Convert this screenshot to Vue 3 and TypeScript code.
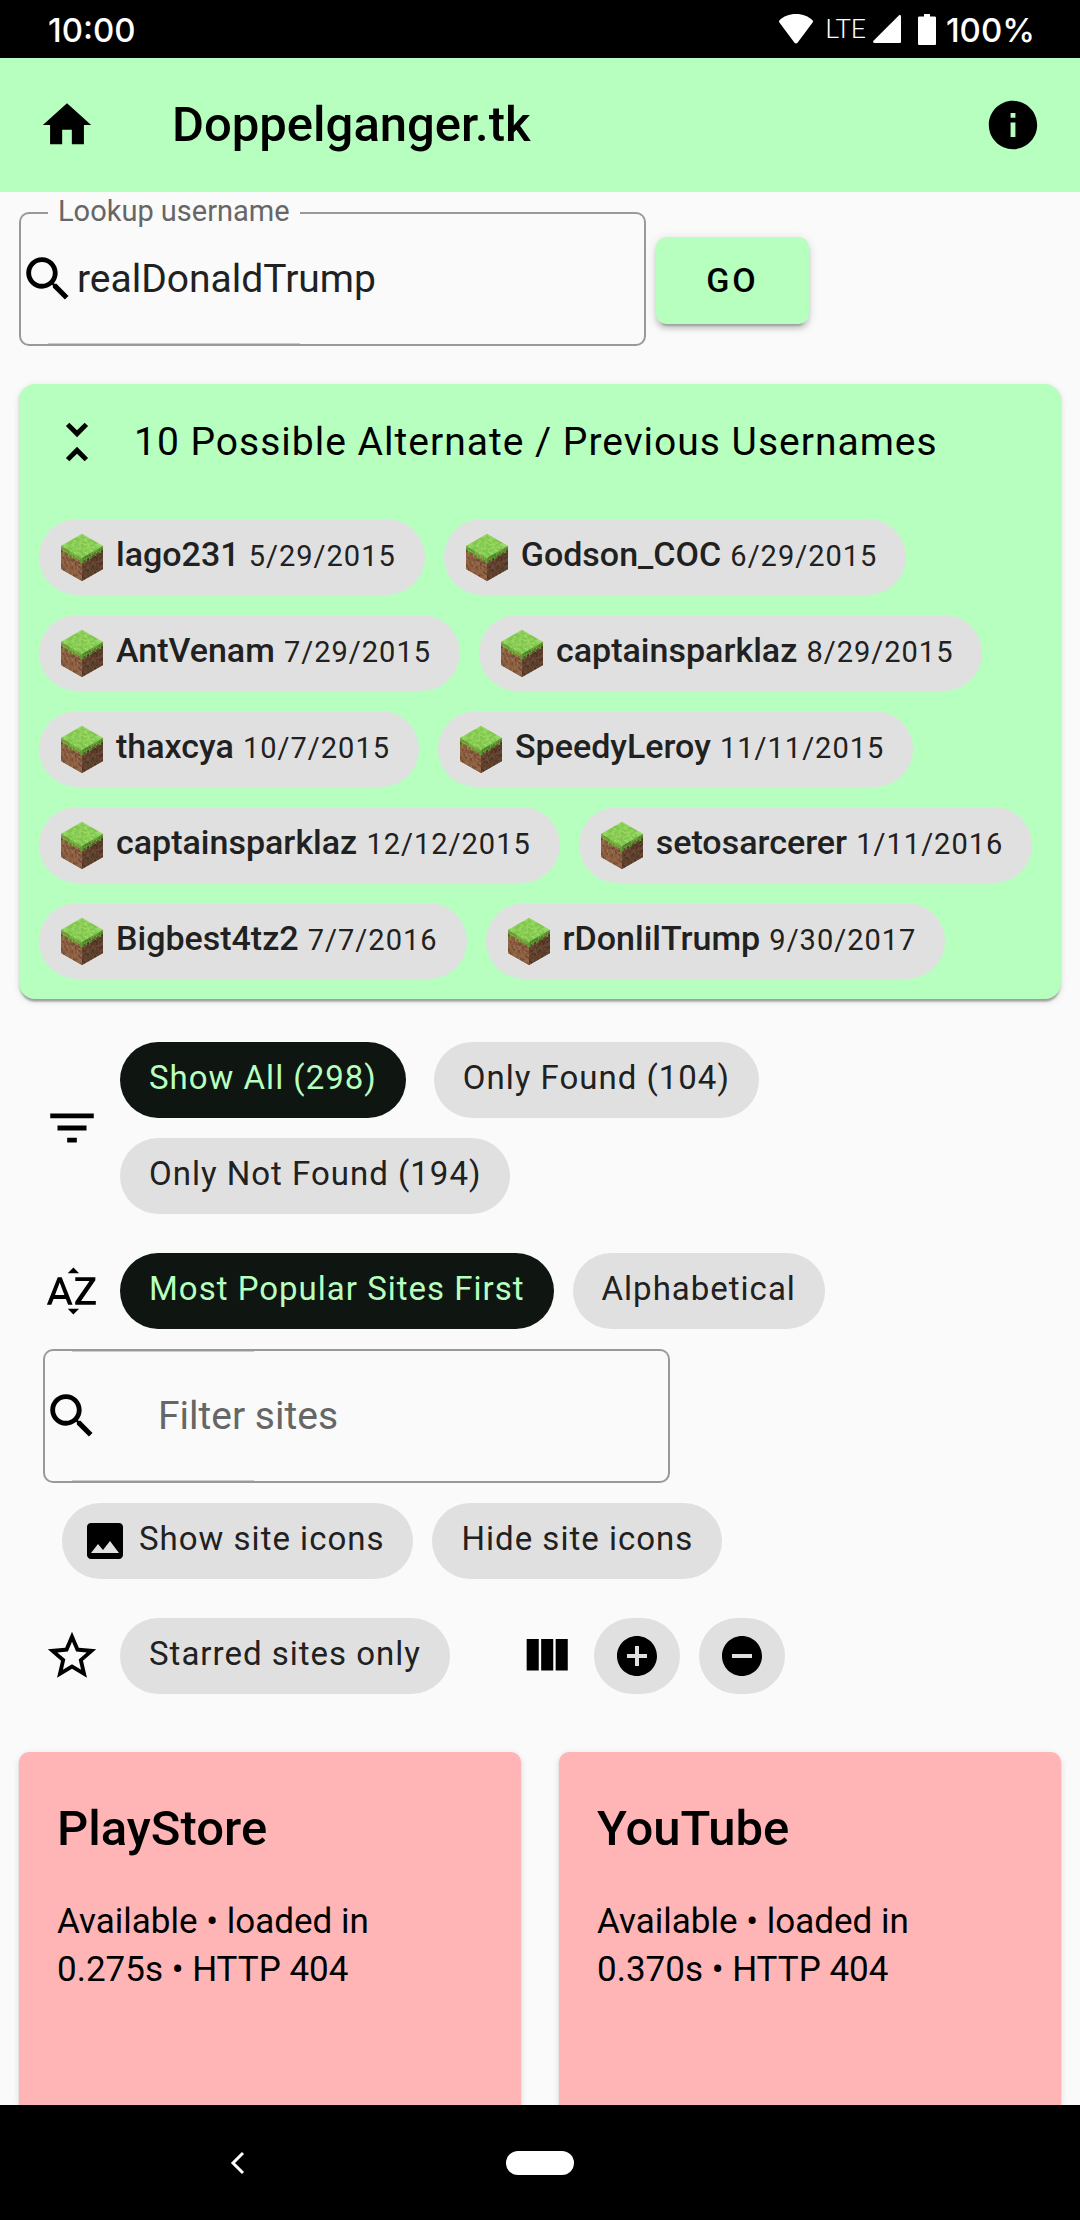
<script setup lang="ts">
import { computed, ref } from 'vue'

interface Alias {
  name: string
  date: string
}

interface Site {
  name: string
  seconds: string
  code: number
}

interface Cell {
  points: string
  fill: string
}

type Point = [number, number]

const username = ref('realDonaldTrump')
const siteQuery = ref('')
const expanded = ref(true)
const shown = ref('all')
const order = ref('popular')
const starredOnly = ref(false)

const aliases: Alias[] = [
  { name: 'lago231', date: '5/29/2015' },
  { name: 'Godson_COC', date: '6/29/2015' },
  { name: 'AntVenam', date: '7/29/2015' },
  { name: 'captainsparklaz', date: '8/29/2015' },
  { name: 'thaxcya', date: '10/7/2015' },
  { name: 'SpeedyLeroy', date: '11/11/2015' },
  { name: 'captainsparklaz', date: '12/12/2015' },
  { name: 'setosarcerer', date: '1/11/2016' },
  { name: 'Bigbest4tz2', date: '7/7/2016' },
  { name: 'rDonlilTrump', date: '9/30/2017' },
]

const visibilityOptions = [
  { id: 'all', label: 'Show All (298)' },
  { id: 'found', label: 'Only Found (104)' },
  { id: 'missing', label: 'Only Not Found (194)' },
]

const orderOptions = [
  { id: 'popular', label: 'Most Popular Sites First' },
  { id: 'alpha', label: 'Alphabetical' },
]

const sites: Site[] = [
  { name: 'PlayStore', seconds: '0.275', code: 404 },
  { name: 'YouTube', seconds: '0.370', code: 404 },
]

const heading = computed(() => `${aliases.length} Possible Alternate / Previous Usernames`)

// Isometric grass block: every face is a grid of small tinted cells.
const grassTop = ['#8acd55', '#94d65f', '#82c44e', '#9bdc6b', '#8ed159', '#7dbf4a']
const grassLeft = ['#6fb83c', '#62a535', '#79c246']
const grassRight = ['#5c9f32', '#4f8c2a', '#66aa3a']
const dirtLeft = ['#8f6244', '#7f5338', '#9c7050', '#6f4830', '#875a3e', '#956949']
const dirtRight = ['#62432f', '#543827', '#704d39', '#48301f', '#684a3a', '#5b3f2b']
const fringe = [2, 3, 2, 2, 3, 2, 3, 3, 2, 3, 2, 3]

function buildFace(
  origin: Point,
  u: Point,
  v: Point,
  pick: (column: number, row: number, noise: number) => string,
): Cell[] {
  const size = 12
  const cells: Cell[] = []
  for (let row = 0; row < size; row++) {
    for (let column = 0; column < size; column++) {
      const noise = (column * 73 + row * 151 + column * row * 37 + row * row * 19) % 97
      const corners: Point[] = [
        [column, row],
        [column + 1, row],
        [column + 1, row + 1],
        [column, row + 1],
      ]
      const points = corners
        .map(([a, b]) => {
          const x = origin[0] + (u[0] * a + v[0] * b) / size
          const y = origin[1] + (u[1] * a + v[1] * b) / size
          return `${x.toFixed(2)},${y.toFixed(2)}`
        })
        .join(' ')
      cells.push({ points, fill: pick(column, row, noise) })
    }
  }
  return cells
}

const blockCells: Cell[] = [
  ...buildFace([21, 0], [21, 12], [-21, 12], (_c, _r, n) => grassTop[n % 6]),
  ...buildFace([0, 12], [21, 12], [0, 23], (c, r, n) =>
    r < fringe[c] ? grassLeft[n % 3] : dirtLeft[n % 6]),
  ...buildFace([21, 24], [21, -12], [0, 23], (c, r, n) =>
    r < fringe[11 - c] ? grassRight[n % 3] : dirtRight[n % 6]),
]
</script>

<template>
  <svg class="sprite" aria-hidden="true">
    <symbol id="grass-block" viewBox="0 0 42 47">
      <polygon points="21,0 42,12 21,24 0,12" fill="#8ed159" />
      <polygon points="0,12 21,24 21,47 0,35" fill="#85593d" />
      <polygon points="21,24 42,12 42,35 21,47" fill="#5e402e" />
      <polygon v-for="(cell, i) in blockCells" :key="i" :points="cell.points" :fill="cell.fill" />
    </symbol>
  </svg>

  <div class="screen">
    <div class="status">
      <span class="clock">10:00</span>
      <div class="status-right">
        <svg class="wifi" viewBox="0 0 34 30" aria-hidden="true">
          <path d="M17 0C10 0 4.500 2.500.6 6.200c-.7.700-.8 1.500-.2 2.300l14.900 20c1 1.300 2.400 1.300 3.400 0l14.900-20c.6-.8.500-1.600-.2-2.300C29.500 2.500 24 0 17 0z" />
        </svg>
        <span class="network">LTE</span>
        <svg class="signal" viewBox="0 0 28 28" aria-hidden="true">
          <path d="M28 1.500V26.500c0 1-.5 1.500-1.500 1.500H1.500C.1 28-.4 26.800.5 25.800L25.800.5C26.800-.4 28 .1 28 1.500z" />
        </svg>
        <svg class="battery" viewBox="0 0 18 31" aria-hidden="true">
          <path d="M6 0h6v2.500h4.500c1 0 1.500.5 1.500 1.500v25.500c0 1-.5 1.500-1.500 1.500h-15C.5 31 0 30.500 0 29.500V4c0-1 .5-1.500 1.500-1.500H6z" />
        </svg>
        <span class="clock">100%</span>
      </div>
    </div>

    <header class="bar">
      <button class="icon-button" type="button" aria-label="Home">
        <svg class="icon" viewBox="0 0 24 24"><path d="M10 20v-6h4v6h5v-8h3L12 3 2 12h3v8z" /></svg>
      </button>
      <h1 class="title">Doppelganger.tk</h1>
      <button class="icon-button" type="button" aria-label="About">
        <svg class="icon" viewBox="0 0 24 24"><path d="M12 2C6.480 2 2 6.480 2 12s4.480 10 10 10 10-4.480 10-10S17.520 2 12 2zm1 15h-2v-6h2v6zm0-8h-2V7h2v2z" /></svg>
      </button>
    </header>

    <main class="content">
      <form class="lookup" @submit.prevent>
        <div class="field">
          <svg class="icon" viewBox="0 0 24 24" aria-hidden="true"><path d="M15.500 14h-.79l-.28-.27C15.410 12.590 16 11.110 16 9.500 16 5.910 13.090 3 9.500 3S3 5.910 3 9.500 5.910 16 9.500 16c1.610 0 3.090-.59 4.230-1.570l.27.28v.79l5 4.990L20.490 19l-4.990-5zm-6 0C7.010 14 5 11.990 5 9.500S7.010 5 9.500 5 14 7.010 14 9.500 11.990 14 9.500 14z" /></svg>
          <input id="username" v-model="username" class="field-input" type="text" />
          <div class="outline">
            <span class="edge-start"></span>
            <span class="notch open"><label class="field-label" for="username">Lookup username</label></span>
            <span class="edge-end"></span>
          </div>
        </div>
        <button class="go" type="submit">GO</button>
      </form>

      <section class="aliases">
        <button class="aliases-head" type="button" :aria-expanded="expanded" @click="expanded = !expanded">
          <svg class="icon" viewBox="0 0 24 24" aria-hidden="true"><path d="M7.410 18.590L8.830 20 12 16.830 15.170 20l1.410-1.410L12 14l-4.590 4.590zm9.180-13.180L15.170 4 12 7.170 8.830 4 7.410 5.410 12 10l4.590-4.590z" /></svg>
          <span>{{ heading }}</span>
        </button>
        <div v-if="expanded" class="alias-chips">
          <button v-for="(alias, i) in aliases" :key="i" class="chip with-icon" type="button">
            <svg class="block" aria-hidden="true"><use href="#grass-block" /></svg>
            <span class="chip-text"><b class="alias-name">{{ alias.name }}</b> <small class="alias-date">{{ alias.date }}</small></span>
          </button>
        </div>
      </section>

      <section class="options">
        <div class="option-row">
          <svg class="icon" viewBox="0 0 24 24" aria-hidden="true"><path d="M10 18h4v-2h-4v2zM3 6v2h18V6H3zm3 7h12v-2H6v2z" /></svg>
          <div class="chips wide-gap">
            <button
              v-for="option in visibilityOptions"
              :key="option.id"
              class="chip"
              :class="{ selected: shown === option.id }"
              type="button"
              :aria-pressed="shown === option.id"
              @click="shown = option.id"
            >
              <span class="chip-text">{{ option.label }}</span>
            </button>
          </div>
        </div>

        <div class="option-row">
          <svg class="icon" viewBox="0 0 24 24" aria-hidden="true"><path d="M14.940 4.660h-4.720l2.360-2.360zm-4.690 14.710h4.660l-2.330 2.330zM6.100 6.270L1.600 17.730h1.840l.92-2.450h5.110l.92 2.450h1.840L7.740 6.270H6.100zm-1.130 7.370l1.940-5.180 1.940 5.180H4.970zm10.760 2.500h6.120v1.590h-8.530v-1.290l5.920-8.560h-5.880v-1.600h8.300v1.260l-5.930 8.600z" /></svg>
          <div class="chips">
            <button
              v-for="option in orderOptions"
              :key="option.id"
              class="chip"
              :class="{ selected: order === option.id }"
              type="button"
              :aria-pressed="order === option.id"
              @click="order = option.id"
            >
              <span class="chip-text">{{ option.label }}</span>
            </button>
          </div>
        </div>

        <div class="field filter">
          <svg class="icon" viewBox="0 0 24 24" aria-hidden="true"><path d="M15.500 14h-.79l-.28-.27C15.410 12.590 16 11.110 16 9.500 16 5.910 13.090 3 9.500 3S3 5.910 3 9.500 5.910 16 9.500 16c1.610 0 3.090-.59 4.230-1.570l.27.28v.79l5 4.990L20.490 19l-4.990-5zm-6 0C7.010 14 5 11.990 5 9.500S7.010 5 9.500 5 14 7.010 14 9.500 11.990 14 9.500 14z" /></svg>
          <input v-model="siteQuery" class="field-input" type="text" placeholder="Filter sites" aria-label="Filter sites" />
          <div class="outline">
            <span class="edge-start"></span>
            <span class="notch closed"></span>
            <span class="edge-end"></span>
          </div>
        </div>

        <div class="chips icon-choice">
          <button class="chip with-icon" type="button">
            <svg class="chip-icon" viewBox="0 0 24 24" aria-hidden="true"><path d="M21 19V5c0-1.100-.9-2-2-2H5c-1.100 0-2 .9-2 2v14c0 1.100.9 2 2 2h14c1.100 0 2-.9 2-2zM8.500 13.500l2.500 3.010L14.500 12l4.500 6H5l3.500-4.500z" /></svg>
            <span class="chip-text">Show site icons</span>
          </button>
          <button class="chip" type="button"><span class="chip-text">Hide site icons</span></button>
        </div>

        <div class="option-row">
          <svg class="icon" viewBox="0 0 24 24" aria-hidden="true"><path d="M22 9.240l-7.190-.62L12 2 9.190 8.630 2 9.240l5.460 4.730L5.820 21 12 17.270 18.180 21l-1.630-7.030L22 9.240zM12 15.400l-3.760 2.270 1-4.280-3.320-2.880 4.380-.38L12 6.100l1.710 4.040 4.380.38-3.320 2.880 1 4.280L12 15.400z" /></svg>
          <button class="chip" type="button" :aria-pressed="starredOnly" @click="starredOnly = !starredOnly">
            <span class="chip-text">Starred sites only</span>
          </button>
          <svg class="icon columns" viewBox="0 0 24 24" aria-hidden="true"><path d="M10 18h5V5h-5v13zm-6 0h5V5H4v13zM16 5v13h5V5h-5z" /></svg>
          <button class="chip only-icon" type="button" aria-label="More columns">
            <svg class="chip-icon" viewBox="0 0 24 24"><path d="M12 2C6.480 2 2 6.480 2 12s4.480 10 10 10 10-4.480 10-10S17.520 2 12 2zm5 11h-4v4h-2v-4H7v-2h4V7h2v4h4v2z" /></svg>
          </button>
          <button class="chip only-icon" type="button" aria-label="Fewer columns">
            <svg class="chip-icon" viewBox="0 0 24 24"><path d="M12 2C6.480 2 2 6.480 2 12s4.480 10 10 10 10-4.480 10-10S17.520 2 12 2zm5 11H7v-2h10v2z" /></svg>
          </button>
        </div>
      </section>

      <section class="sites">
        <article v-for="site in sites" :key="site.name" class="site">
          <h2 class="site-name">{{ site.name }}</h2>
          <p class="site-info">Available • loaded in {{ site.seconds }}s • HTTP {{ site.code }}</p>
        </article>
      </section>
    </main>

    <nav class="system-nav">
      <button class="back" type="button" aria-label="Back">
        <svg viewBox="0 0 16 24"><path d="M14 2L4 12l10 10" /></svg>
      </button>
      <button class="pill" type="button" aria-label="Home screen"></button>
    </nav>
  </div>
</template>

<style>
body {
  margin: 0;
  background: #fafafa;
}
</style>

<style scoped>
.sprite {
  position: absolute;
  width: 0;
  height: 0;
}

.screen {
  display: flex;
  flex-direction: column;
  min-height: 100vh;
  color: #000;
  font-family: Roboto, "Noto Sans", sans-serif;
  font-size: 34px;
  line-height: 48px;
}

.screen,
.screen * {
  box-sizing: border-box;
}

button {
  margin: 0;
  padding: 0;
  border: 0;
  background: none;
  color: inherit;
  font: inherit;
  cursor: pointer;
}

svg {
  display: block;
  flex: none;
  fill: currentColor;
}

.icon {
  width: 58px;
  height: 58px;
}

.status {
  display: flex;
  align-items: center;
  justify-content: space-between;
  height: 58px;
  padding: 0 45px 0 48px;
  background: #000;
  color: #fff;
}

.status-right {
  display: flex;
  align-items: center;
}

.clock {
  padding-top: 2px;
  font-family: Inter, Roboto, sans-serif;
  font-size: 33px;
  font-weight: 500;
}

.wifi {
  width: 34px;
  height: 30px;
}

.network {
  margin: 0 7px 0 12px;
  font-size: 26px;
  font-weight: 300;
}

.signal {
  width: 28px;
  height: 28px;
}

.battery {
  width: 18px;
  height: 31px;
  margin: 0 10px 0 17px;
}

.bar {
  display: flex;
  align-items: center;
  gap: 76px;
  height: 134px;
  padding: 0 38px;
  background: #b7ffbf;
}

.title {
  flex: 1;
  margin: 0;
  font-size: 49px;
  font-weight: 500;
}

.content {
  display: flex;
  flex: 1;
  flex-direction: column;
  padding: 20px 19px 0;
}

.lookup {
  display: flex;
  align-items: center;
  gap: 10px;
  margin-bottom: 38px;
}

.field {
  position: relative;
  display: flex;
  align-items: center;
  width: 627px;
  max-width: 100%;
  height: 134px;
}

.field-input {
  flex: 1;
  min-width: 0;
  height: 100%;
  padding: 0;
  border: 0;
  outline: 0;
  background: none;
  color: #212121;
  font: inherit;
  font-size: 39px;
}

.field-input::placeholder {
  color: #666;
  opacity: 1;
}

.filter .field-input {
  padding-left: 57px;
}

.outline {
  position: absolute;
  inset: 0;
  display: flex;
  pointer-events: none;
}

.edge-start {
  width: 29px;
  border: 2px solid #999;
  border-right: 0;
  border-radius: 10px 0 0 10px;
}

.edge-end {
  flex: 1;
  border: 2px solid #999;
  border-left: 0;
  border-radius: 0 10px 10px 0;
}

.notch {
  border-bottom: 2px solid #999;
  box-shadow: inset 0 -1px #ccc;
}

.notch.open {
  padding: 0 10px;
}

.notch.closed {
  width: 182px;
  border-top: 2px solid #999;
  box-shadow: inset 0 -1px #ccc, inset 0 1px #ccc;
}

.field-label {
  display: block;
  margin-top: -25px;
  color: #666;
  font-size: 29px;
}

.go {
  width: 153px;
  height: 87px;
  margin-top: 2px;
  border-radius: 10px;
  background: #b7ffbf;
  box-shadow: 0 7px 2px -5px rgba(0, 0, 0, 0.2), 0 5px 5px rgba(0, 0, 0, 0.14), 0 2px 12px rgba(0, 0, 0, 0.12);
  font-weight: 500;
  letter-spacing: 3px;
}

.aliases {
  border-radius: 16px;
  background: #b7ffbf;
  box-shadow: 0 5px 2px -2px rgba(0, 0, 0, 0.2), 0 2px 2px rgba(0, 0, 0, 0.14), 0 2px 7px rgba(0, 0, 0, 0.12);
}

.aliases-head {
  display: flex;
  align-items: center;
  gap: 28px;
  width: 100%;
  height: 115px;
  padding: 0 29px;
  font-size: 39px;
  letter-spacing: 1px;
  text-align: left;
}

.alias-chips {
  display: flex;
  flex-wrap: wrap;
  gap: 20px 19px;
  padding: 20px;
}

.chips {
  display: flex;
  flex-wrap: wrap;
  gap: 20px 19px;
}

.chips.wide-gap {
  column-gap: 28px;
}

.chip {
  display: inline-flex;
  align-items: center;
  gap: 10px;
  height: 76px;
  padding: 0 29px;
  border-radius: 38px;
  background: #e0e0e0;
  color: #212121;
  font-size: 33px;
  letter-spacing: 1px;
}

.chip.with-icon {
  padding-left: 19px;
}

.chip.only-icon {
  padding: 0 19px;
}

.chip.selected {
  background: #0f1611;
  color: #b7ffbf;
}

.chip-text {
  padding-bottom: 4px;
  white-space: nowrap;
}

.chip-icon {
  width: 48px;
  height: 48px;
  color: #000;
}

.block {
  width: 42px;
  height: 47px;
  margin: 0 3px;
}

.alias-name {
  font-size: 34px;
  font-weight: 500;
  letter-spacing: 0;
}

.alias-date {
  font-size: 29px;
}

.options {
  display: flex;
  flex-direction: column;
  gap: 20px;
  padding: 43px 24px 58px;
}

.option-row {
  display: flex;
  align-items: center;
  gap: 19px;
}

.option-row + .option-row,
.icon-choice + .option-row {
  margin-top: 19px;
}

.icon-choice {
  padding-left: 19px;
}

.columns {
  margin-left: 48px;
}

.sites {
  display: grid;
  flex: 1;
  grid-template-columns: 1fr 1fr;
  gap: 38px;
}

.site {
  padding: 48px 38px;
  border-radius: 10px 10px 0 0;
  background: #ffb5b5;
  box-shadow: 0 2px 2px rgba(0, 0, 0, 0.14), 0 2px 7px rgba(0, 0, 0, 0.12);
}

.site-name {
  margin: 0 0 41px;
  font-size: 49px;
  font-weight: 500;
  line-height: 57px;
}

.site-info {
  max-width: 340px;
  margin: 0;
  font-size: 35px;
}

.system-nav {
  position: relative;
  display: grid;
  grid-template-columns: 1fr 68px 1fr;
  align-items: center;
  height: 115px;
  background: #000;
}

.back {
  justify-self: center;
  margin-right: 32px;
}

.back svg {
  width: 16px;
  height: 24px;
  fill: none;
  stroke: #fff;
  stroke-width: 3;
}

.pill {
  height: 24px;
  border-radius: 12px;
  background: #fff;
}
</style>
